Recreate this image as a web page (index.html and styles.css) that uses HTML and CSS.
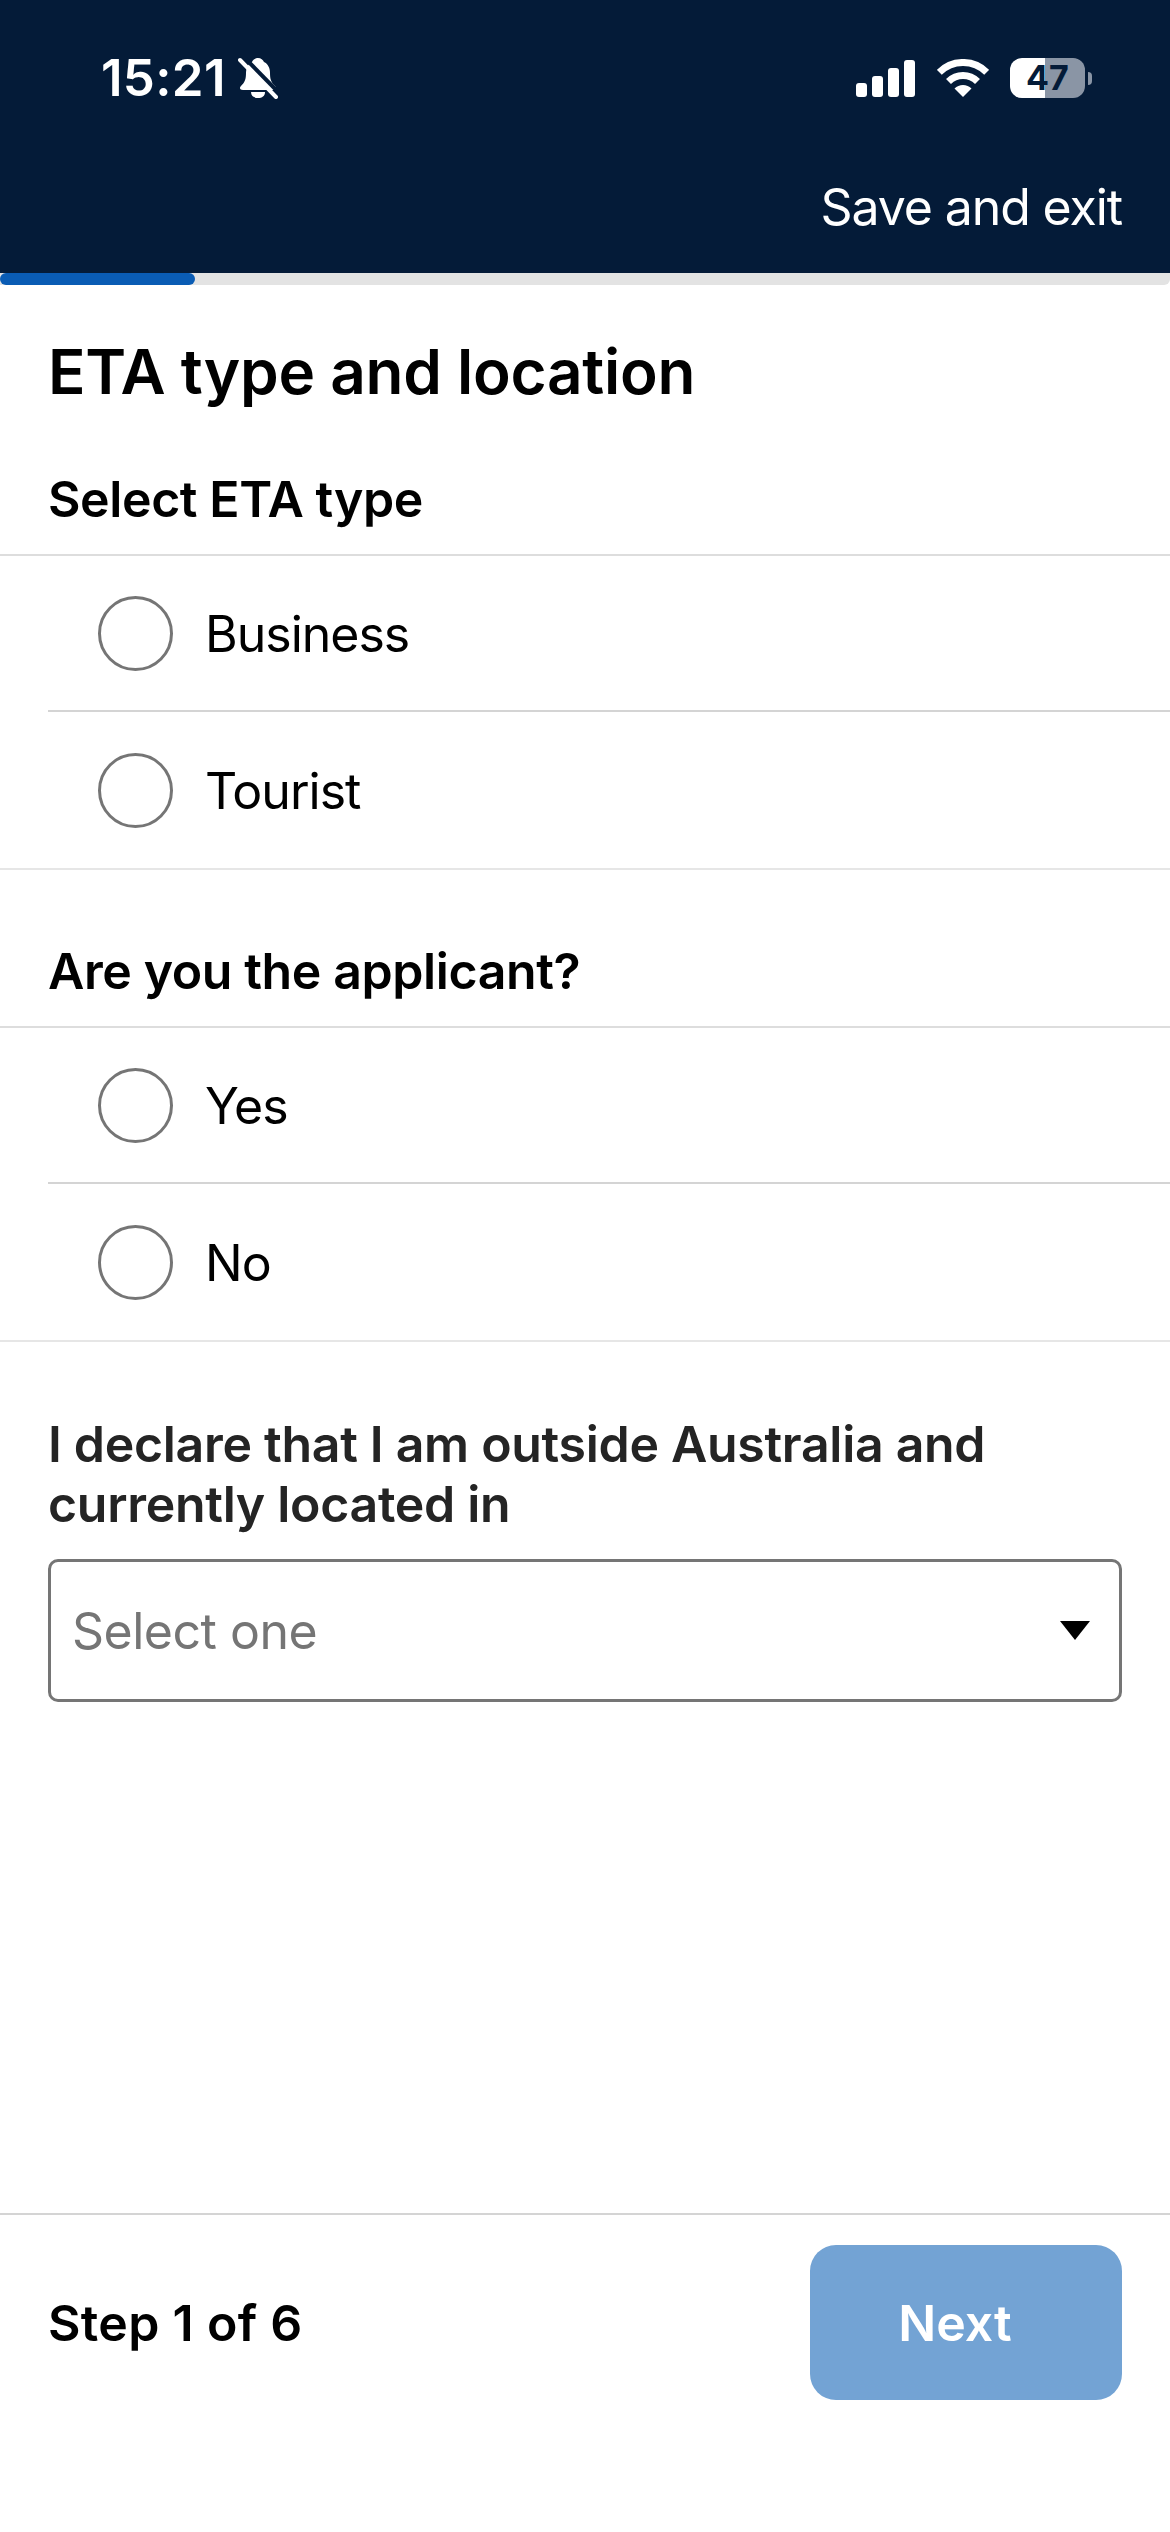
FILE: index.html
```html
<!DOCTYPE html>
<html lang="en">
  <head>
    <meta charset="UTF-8" />
    <meta name="viewport" content="width=device-width, initial-scale=1.0" />
    <title>ETA type and location</title>
    <link rel="stylesheet" href="styles.css">
  </head>

  <body>
    <div class="page">
      <header class="top">
        <div class="status">
          <div class="status-left">
            <span class="time">15:21</span>
            <svg class="bell" width="40" height="42" viewBox="0 0 40 42">
              <path d="M20 1c3 0 5 2 6 4 4 2 6 6 6 11 0 6 1 9 5 13 2 2 1 4-2 4H5c-3 0-4-2-2-4 4-4 5-7 5-13 0-5 2-9 6-11 1-2 3-4 6-4z" fill="#fff" />
              <path d="M13 35h14c0 4-3 6-7 6s-7-2-7-6z" fill="#fff" />
              <path d="M5 -1 42 37" stroke="#041b38" stroke-width="4" />
              <path d="M2 3 38 40" stroke="#fff" stroke-width="4" stroke-linecap="round" />
            </svg>
          </div>
          <div class="status-right">
            <div class="signal">
              <i class="bar-1"></i>
              <i class="bar-2"></i>
              <i class="bar-3"></i>
              <i class="bar-4"></i>
            </div>
            <svg class="wifi" width="52" height="38" viewBox="0 0 52 38">
              <path d="M2.300 13.300a33.500 33.500 0 0 1 47.400 0" fill="none" stroke="#fff" stroke-width="7" />
              <path d="M11.500 22.500a20.500 20.500 0 0 1 29 0" fill="none" stroke="#fff" stroke-width="7" />
              <path d="M26 38 17.500 29.500a12 12 0 0 1 17 0z" fill="#fff" />
            </svg>
            <div class="battery">
              <span class="level">47</span>
              <i class="nub"></i>
            </div>
          </div>
        </div>
        <a class="save">Save and exit</a>
      </header>
      <div class="progress"><div class="progress-fill"></div></div>

      <main class="form">
        <h1>ETA type and location</h1>

        <h2 class="group-title">Select ETA type</h2>
        <div class="options">
          <label class="option"><i class="radio"></i><span>Business</span></label>
          <label class="option"><i class="radio"></i><span>Tourist</span></label>
        </div>

        <h2 class="group-title second">Are you the applicant?</h2>
        <div class="options">
          <label class="option"><i class="radio"></i><span>Yes</span></label>
          <label class="option"><i class="radio"></i><span>No</span></label>
        </div>

        <p class="declare">I declare that I am outside Australia and currently located in</p>
        <div class="select">
          <span>Select one</span>
          <i class="caret"></i>
        </div>
      </main>

      <footer class="bottom">
        <span class="step">Step 1 of 6</span>
        <button class="next">Next</button>
      </footer>
    </div>
  </body>
</html>
```

FILE: styles.css
```css
* {
  box-sizing: border-box;
}

body {
  margin: 0;
  background: #fff;
  font-family: Inter, "Liberation Sans", sans-serif;
  color: #000;
}

.page {
  height: 2532px;
  display: flex;
  flex-direction: column;
}

/* header */
.top {
  height: 273px;
  background: #041b38;
  color: #fff;
  padding: 57px 48px 0 101px;
}

.status {
  height: 42px;
  display: flex;
  justify-content: space-between;
  align-items: center;
}

.status-left {
  display: flex;
  align-items: center;
  gap: 12px;
}

.time {
  font-size: 51px;
  font-weight: 600;
  line-height: 42px;
  letter-spacing: 0.3px;
}

.status-right {
  display: flex;
  align-items: center;
  margin-right: 30px;
}

.signal {
  display: flex;
  align-items: flex-end;
  gap: 5px;
  height: 37px;
  margin-right: 22px;
}

.signal i {
  width: 11px;
  background: #fff;
  border-radius: 3px;
}

.signal .bar-1 {
  height: 14px;
}

.signal .bar-2 {
  height: 21px;
}

.signal .bar-3 {
  height: 29px;
}

.signal .bar-4 {
  height: 37px;
}

.wifi {
  margin-right: 21px;
}

.battery {
  display: flex;
  align-items: center;
  gap: 3px;
}

.level {
  width: 75px;
  height: 40px;
  border-radius: 12px;
  background: linear-gradient(to right, #fff 35px, #8a95a5 35px);
  color: #041b38;
  font-size: 34px;
  font-weight: 700;
  line-height: 40px;
  text-align: center;
}

.nub {
  width: 4px;
  height: 13px;
  background: #8a95a5;
  border-radius: 0 4px 4px 0;
}

.save {
  display: block;
  margin-top: 78px;
  text-align: right;
  font-size: 50px;
  line-height: 60px;
  font-weight: 400;
  letter-spacing: -1.1px;
}

.progress {
  height: 12px;
  background: #e3e3e3;
  border-radius: 0 0 6px 0;
}

.progress-fill {
  width: 195px;
  height: 12px;
  background: #0a5cb4;
  border-radius: 6px;
}

/* form */
.form {
  flex: 1;
}

h1 {
  margin: 0;
  padding: 54px 48px 0;
  font-size: 62px;
  line-height: 66px;
  font-weight: 600;
  letter-spacing: -0.25px;
}

.group-title {
  margin: 0;
  padding: 64px 48px 25px;
  font-size: 50px;
  line-height: 60px;
  font-weight: 600;
  letter-spacing: -0.4px;
  border-bottom: 2px solid #ddd;
}

.group-title.second {
  padding-top: 71px;
}

.options {
  border-bottom: 2px solid #e6e6e6;
}

.option {
  height: 156px;
  margin-left: 48px;
  padding-left: 50px;
  display: flex;
  align-items: center;
  gap: 32px;
  font-size: 50px;
  letter-spacing: -1px;
  border-bottom: 2px solid #d4d4d4;
}

.option:last-child {
  border-bottom: none;
}

.option span {
  padding-top: 2px;
}

.radio {
  width: 75px;
  height: 75px;
  border: 3px solid #757575;
  border-radius: 50%;
}

.declare {
  margin: 72px 48px 0;
  font-size: 50px;
  line-height: 60px;
  font-weight: 600;
  letter-spacing: -0.3px;
  color: #242424;
}

.select {
  height: 143px;
  margin: 25px 48px 0;
  padding: 0 29px 0 21px;
  display: flex;
  justify-content: space-between;
  align-items: center;
  border: 3px solid #757575;
  border-radius: 10px;
  font-size: 50px;
  letter-spacing: -0.5px;
  color: #757575;
}

.caret {
  width: 0;
  height: 0;
  border-left: 15px solid transparent;
  border-right: 15px solid transparent;
  border-top: 19px solid #000;
}

/* footer */
.bottom {
  height: 319px;
  padding: 30px 48px 0;
  display: flex;
  justify-content: space-between;
  align-items: flex-start;
  border-top: 2px solid #d4d4d4;
}

.step {
  margin-top: 48px;
  font-size: 50px;
  line-height: 60px;
  font-weight: 600;
  letter-spacing: 0.3px;
}

.next {
  width: 312px;
  height: 155px;
  padding: 0 22px 0 0;
  border: none;
  border-radius: 26px;
  background: #73a3d4;
  color: #fff;
  font-family: inherit;
  font-size: 50px;
  font-weight: 600;
}
```
